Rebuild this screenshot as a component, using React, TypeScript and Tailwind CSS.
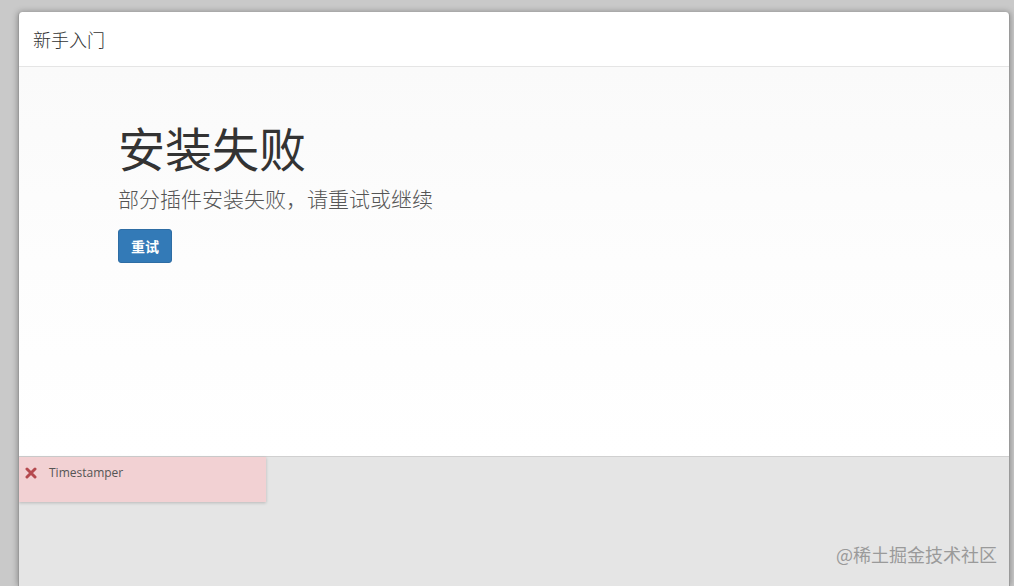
import React from 'react';

const cjk = { fontFamily: '"Microsoft YaHei", "Noto Sans CJK SC", "Open Sans", sans-serif' };

export default function App() {
  return (
    <div className="w-[1014px] h-[586px] overflow-hidden bg-[#c9c9c9] pt-[12px] pl-[18px] pr-[4px] flex" style={cjk}>
      <div className="flex-1 flex flex-col bg-white border-l border-r border-[#9a9a9a] rounded-t-[4px] shadow-[0_0_6px_rgba(0,0,0,0.35)] overflow-hidden">
        {/* Header */}
        <div className="h-[55px] shrink-0 flex items-center px-[14px] border-b border-[#e5e5e5]">
          <span className="text-[18px] font-light text-[#333]">新手入门</span>
        </div>

        {/* Body */}
        <div className="h-[389px] shrink-0 bg-gradient-to-b from-[#fafafa] via-[#fdfdfd] to-white">
          <div className="pl-[99px] pt-[50px] flex flex-col items-start">
            <h1 className="text-[47px] leading-[60px] text-[#333] font-normal">安装失败</h1>
            <p className="text-[21px] leading-[28px] text-[#555] font-light mt-[7px]">部分插件安装失败，请重试或继续</p>
            <button className="mt-[17px] w-[54px] h-[34px] bg-[#337ab7] border border-[#2e6da4] rounded-[3px] text-white text-[14px] font-bold">
              重试
            </button>
          </div>
        </div>

        {/* Footer area */}
        <div className="flex-1 bg-[#e5e5e5] border-t border-[#d0d0d0] relative">
          <div className="w-[247px] h-[45px] bg-[#f2d1d3] shadow-[0_1px_3px_rgba(0,0,0,0.2)] pt-[7px] pl-[6px]">
            <div className="flex items-center h-[18px] gap-[12px]">
              <svg width="12" height="12" viewBox="0 0 12 12">
                <path d="M2 2 L10 10 M10 2 L2 10" stroke="#b54a4f" strokeWidth="3" strokeLinecap="round" />
              </svg>
              <span className="text-[12px] text-[#555]" style={{ fontFamily: '"Open Sans", sans-serif' }}>Timestamper</span>
            </div>
          </div>
          <div className="absolute right-[12px] bottom-[18px] text-[18px] text-[#9a9a9a]">@稀土掘金技术社区</div>
        </div>
      </div>
    </div>
  );
}
